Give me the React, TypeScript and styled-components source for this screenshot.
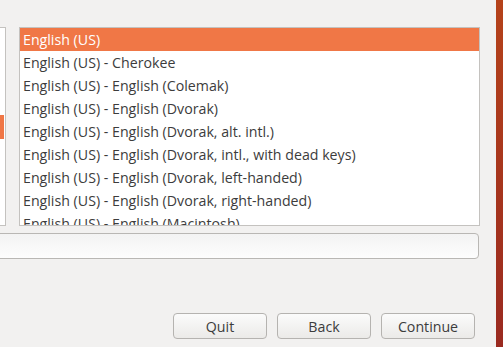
import styled, { createGlobalStyle } from "styled-components";

const layouts = [
  "English (US)",
  "English (US) - Cherokee",
  "English (US) - English (Colemak)",
  "English (US) - English (Dvorak)",
  "English (US) - English (Dvorak, alt. intl.)",
  "English (US) - English (Dvorak, intl., with dead keys)",
  "English (US) - English (Dvorak, left-handed)",
  "English (US) - English (Dvorak, right-handed)",
  "English (US) - English (Macintosh)",
];

const GlobalStyle = createGlobalStyle`
  html, body {
    margin: 0;
    padding: 0;
    background: #f2f1f0;
    overflow: hidden;
  }

  body {
    font-family: "Open Sans", "DejaVu Sans", sans-serif;
  }
`;

export default function App() {
  return (
    <>
      <GlobalStyle />
      <S.Window>
        <S.Main>
          <S.Lists>
            <S.LayoutGroups>
              <S.GroupHighlight />
            </S.LayoutGroups>
            <S.Variants>
              {layouts.map((name, i) => (
                <S.Row key={name} $selected={i === 0}>
                  {name}
                </S.Row>
              ))}
            </S.Variants>
          </S.Lists>
          <S.TestInput />
          <S.Buttons>
            <S.Button>Quit</S.Button>
            <S.Button>Back</S.Button>
            <S.Button>Continue</S.Button>
          </S.Buttons>
        </S.Main>
        <S.Edge />
      </S.Window>
    </>
  );
}

const S = {
  Window: styled.div`
    display: flex;
    width: 503px;
    height: 347px;
    overflow: hidden;
  `,

  Main: styled.div`
    flex: 1;
    display: flex;
    flex-direction: column;
    padding-top: 27px;
    min-width: 0;
  `,

  Lists: styled.div`
    display: flex;
    gap: 13px;
    height: 199px;
  `,

  LayoutGroups: styled.div`
    width: 6px;
    box-sizing: border-box;
    background: #ffffff;
    border: 1px solid #c4c2bf;
    border-left: none;
    padding-top: 87px;
  `,

  GroupHighlight: styled.div`
    height: 24px;
    margin-right: 1px;
    background: #f07746;
  `,

  Variants: styled.div`
    width: 461px;
    box-sizing: border-box;
    background: #ffffff;
    border: 1px solid #c4c2bf;
    overflow: hidden;
  `,

  Row: styled.div<{ $selected?: boolean }>`
    height: 23px;
    line-height: 23px;
    padding-left: 3px;
    font-size: 14.2px;
    white-space: nowrap;
    color: ${({ $selected }) => ($selected ? "#ffffff" : "#3c3c3c")};
    background: ${({ $selected }) => ($selected ? "#f07746" : "transparent")};
  `,

  TestInput: styled.div`
    margin-top: 7px;
    margin-left: -10px;
    width: 489px;
    height: 26px;
    box-sizing: border-box;
    border: 1px solid #b9b7b4;
    border-radius: 4px;
    background: linear-gradient(#f3f3f3, #fdfdfd);
  `,

  Buttons: styled.div`
    display: flex;
    justify-content: flex-end;
    gap: 10px;
    margin-top: 54px;
    padding-right: 21px;
  `,

  Button: styled.div`
    width: 94px;
    height: 26px;
    box-sizing: border-box;
    display: flex;
    align-items: center;
    justify-content: center;
    border: 1px solid #b5b3b0;
    border-radius: 4px;
    background: linear-gradient(#fbfbfb, #ebeae8);
    color: #3c3c3c;
    font-size: 14.2px;
  `,

  Edge: styled.div`
    width: 7px;
    flex-shrink: 0;
    background: linear-gradient(#b5421a, #9a2a20);
  `,
};
